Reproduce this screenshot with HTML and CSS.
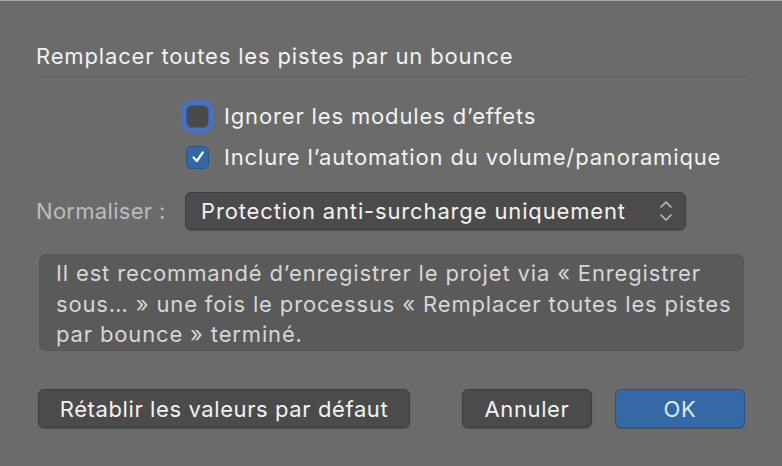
FILE: index.html
```html
<!DOCTYPE html>
<html lang="fr">
<head>
  <meta charset="UTF-8">
  <title>Remplacer toutes les pistes par un bounce</title>
  <link rel="stylesheet" href="styles.css">
</head>
<body>
  <div class="dialog">
    <div class="title">Remplacer toutes les pistes par un bounce</div>
    <div class="separator"></div>

    <div class="options">
      <label class="option">
        <span class="checkbox focused"></span>
        <span>Ignorer les modules d’effets</span>
      </label>
      <label class="option">
        <span class="checkbox checked">
          <svg width="16" height="16" viewBox="0 0 16 16"><path d="M3.5 8.5 L6.8 12 L12.8 3.5" fill="none" stroke="#fff" stroke-width="2.2" stroke-linecap="round" stroke-linejoin="round"/></svg>
        </span>
        <span>Inclure l’automation du volume/panoramique</span>
      </label>
    </div>

    <div class="normalize-row">
      <span class="field-label">Normaliser :</span>
      <div class="popup">
        <span>Protection anti-surcharge uniquement</span>
        <svg class="chevrons" width="14" height="24" viewBox="0 0 14 24"><path d="M2 8 L7 3 L12 8 M2 16 L7 21 L12 16" fill="none" stroke="#bdbdbd" stroke-width="1.6" stroke-linecap="round" stroke-linejoin="round"/></svg>
      </div>
    </div>

    <div class="notice">
      Il est recommandé d’enregistrer le projet via « Enregistrer sous… » une fois le processus « Remplacer toutes les pistes par bounce » terminé.
    </div>

    <div class="buttons">
      <button class="btn reset">Rétablir les valeurs par défaut</button>
      <div class="right-buttons">
        <button class="btn">Annuler</button>
        <button class="btn primary">OK</button>
      </div>
    </div>
  </div>
</body>
</html>
```

FILE: styles.css
```css
body {
  margin: 0;
  background: #6b6b6b;
  font-family: Inter, 'Noto Sans', sans-serif;
  font-size: 22px;
  letter-spacing: 0.85px;
  color: #f2f2f2;
  height: 466px;
  overflow: hidden;
  border-top: 1px solid #a9a9a9;
  box-sizing: border-box;
}

.dialog {
  padding: 43px 35px 0 36px;
  display: flex;
  flex-direction: column;
}

.title {
  line-height: 24px;
  height: 24px;
}

.separator {
  margin-top: 8px;
  height: 1px;
  background: #5e5e5e;
  width: 711px;
}

.options {
  margin-top: 24px;
  margin-left: 150px;
  display: flex;
  flex-direction: column;
  gap: 11px;
}

.option {
  display: flex;
  align-items: center;
  height: 30px;
  gap: 15px;
}

.checkbox {
  width: 23px;
  height: 23px;
  border-radius: 5px;
  background: #4a4a4a;
  border: 1px solid #3c3c3c;
  box-sizing: border-box;
  display: flex;
  align-items: center;
  justify-content: center;
  flex-shrink: 0;
}

.checkbox.focused {
  box-shadow: 0 0 0 5px #4a70c0;
  border-color: #3f5f9e;
  border-radius: 6px;
}

.checkbox.checked {
  background: #3468a4;
  border-color: #2a5283;
}

.normalize-row {
  margin-top: 20px;
  display: flex;
  align-items: center;
}

.field-label {
  width: 149px;
  color: #bcbcbc;
  letter-spacing: 0.3px;
}

.popup {
  width: 501px;
  height: 38px;
  box-sizing: border-box;
  background: #4b4b4b;
  border: 1px solid #3e3e3e;
  border-radius: 6px;
  display: flex;
  align-items: center;
  justify-content: space-between;
  padding: 0 12px 0 15px;
  box-shadow: 0 1px 1px rgba(0,0,0,0.2);
}

.chevrons {
  display: block;
}

.notice {
  margin-top: 24px;
  margin-left: 3px;
  width: 705px;
  height: 97px;
  box-sizing: border-box;
  background: #5a5a5a;
  border: 1px solid #555;
  border-radius: 7px;
  padding: 3px 6px 3px 16px;
  line-height: 30.5px;
  color: #d6d6d6;
}

.buttons {
  margin-top: 38px;
  margin-left: 2px;
  width: 707px;
  display: flex;
  justify-content: space-between;
}

.right-buttons {
  display: flex;
  gap: 23px;
}

.btn {
  font-family: inherit;
  font-size: 22px;
  letter-spacing: 0.6px;
  color: #f2f2f2;
  height: 39px;
  width: 130px;
  background: #4b4b4b;
  border: 1px solid #3e3e3e;
  border-radius: 6px;
  padding: 0;
  box-shadow: 0 1px 1px rgba(0,0,0,0.2);
}

.btn.reset {
  width: 372px;
}

.btn.primary {
  background: #3569a5;
  border-color: #2a5283;
  color: #dfe9f5;
}
```
